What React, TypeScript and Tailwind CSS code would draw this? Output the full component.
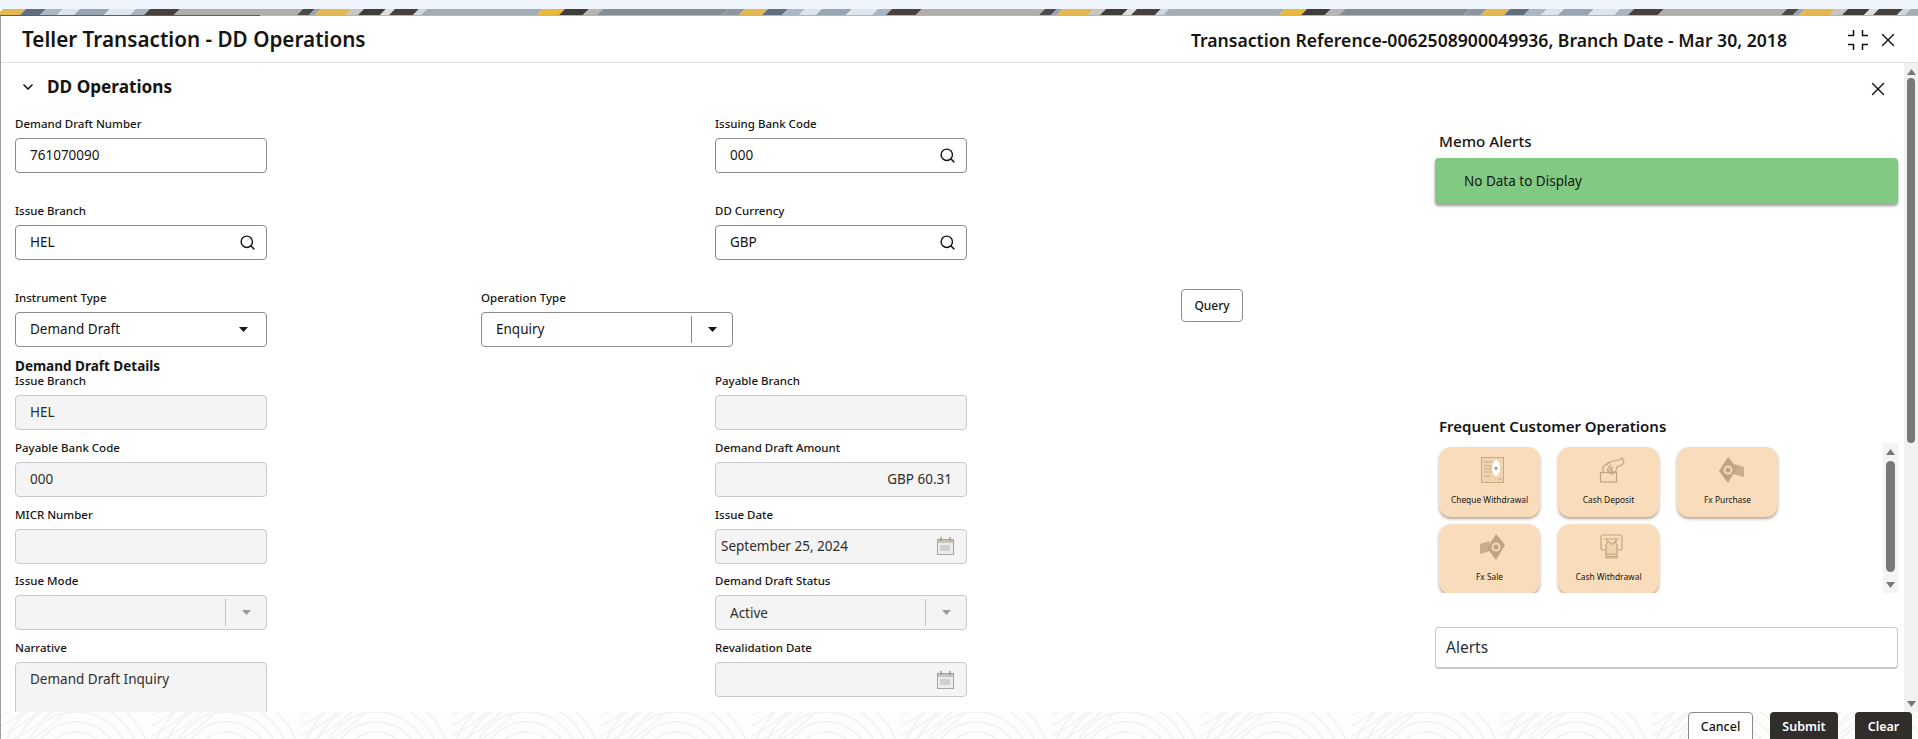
import { Search, X, ChevronDown } from "lucide-react";
import type { ReactNode } from "react";

// one repeat of the banner image, [end x, colour]; it tiles every 742px
const STRIP: [number, string][] = [
  [23, "#e3b84f"], [43, "#5f6f7d"], [60, "#a9b6c4"], [77, "#dbe3ec"], [107, "#98a5b2"], [133, "#dde5ee"], [147, "#a8b4c0"],
  [177, "#46413d"], [300, "#b0aeaa"], [312, "#4b4a48"], [318, "#9aa4ae"], [349, "#e3b84f"], [361, "#c5c5c2"], [383, "#3f3d3b"],
  [392, "#dddddb"], [416, "#45413e"], [424, "#cfd6dd"], [540, "#a3adb6"], [562, "#e8b93e"], [586, "#3f3d3b"], [600, "#b5b5b2"],
  [725, "#858e96"], [742, "#8e979f"],
];

function TopStrip() {
  return (
    <svg className="block h-[7px] w-full" viewBox="0 0 1918 7" preserveAspectRatio="none">
      {[0, 742, 1484].map((base) =>
        STRIP.map(([to, fill], i) => {
          const from = i === 0 ? 0 : STRIP[i - 1][0];
          return (
            <path
              key={`${base}-${to}`}
              d={`M${base + from - 3} 6H${base + to - 3}L${base + to + 3} 0H${base + from + 3}Z`}
              fill={fill}
            />
          );
        }),
      )}
      <rect x="0" y="6" width="260" height="1" fill="#5b5d72" />
      <rect x="260" y="6" width="1658" height="1" fill="#b4b6ba" />
    </svg>
  );
}

function FooterPattern() {
  return (
    <svg className="absolute inset-0 h-full w-full" aria-hidden="true">
      <defs>
        <pattern id="swirl" width="150" height="60" patternUnits="userSpaceOnUse" y="-6">
          {[14, 24, 34, 44, 54, 64, 74].map((r) => (
            <path key={r} d={`M${75 - r} 60A${r} ${r} 0 0 1 ${75 + r} 60`} fill="none" stroke="#f2f1f0" strokeWidth="1.5" />
          ))}
          {[10, 20, 30, 40, 50].map((r) => (
            <path key={r} d={`M0 ${r}Q${r} ${r / 2} ${r * 1.4} 0`} fill="none" stroke="#f3f2f1" strokeWidth="1.5" />
          ))}
        </pattern>
      </defs>
      <rect width="100%" height="100%" fill="#fdfdfc" />
      <rect width="100%" height="100%" fill="url(#swirl)" />
    </svg>
  );
}

function Caret({ muted }: { muted?: boolean }) {
  return (
    <svg width="9" height="5" viewBox="0 0 9 5" className={muted ? "text-[#9a9a9a]" : "text-[#161513]"}>
      <path d="M0 0h9L4.5 5z" fill="currentColor" />
    </svg>
  );
}

function CalendarIcon() {
  return (
    <svg width="17" height="18" viewBox="0 0 17 18" className="shrink-0">
      <rect x="0.5" y="2.5" width="16" height="15" fill="#e9edf2" stroke="#a8a39b" />
      <rect x="1" y="3" width="15" height="3" fill="#c9c4bb" />
      <path d="M4 0v4M13 0v4" stroke="#9b958c" strokeWidth="1.4" />
      <path d="M4 8v6M6 8v6M8 8v6M10 8v6M12 8v6" stroke="#b5b3af" />
    </svg>
  );
}

function Field({
  label,
  children,
  disabled,
  tall,
  className = "",
}: {
  label: string;
  children?: ReactNode;
  disabled?: boolean;
  tall?: boolean;
  className?: string;
}) {
  return (
    <div className={`w-[252px] ${className}`}>
      <div className="mb-[6px] h-4 text-[11.5px] leading-4 font-medium whitespace-nowrap text-[#161513]">{label}</div>
      <div
        className={`flex rounded-[4px] border text-[13.5px] ${tall ? "h-[70px] items-start pt-[6px]" : "h-[35px] items-center"} ${
          disabled ? "border-[#c9c9c9] bg-[#f4f4f4] text-[#2f2d2b]" : "border-[#8b8b8b] bg-white text-[#161513]"
        }`}
      >
        {children}
      </div>
    </div>
  );
}

function Value({ children }: { children?: ReactNode }) {
  return <span className="flex-1 pl-[14px]">{children}</span>;
}

function SearchBtn() {
  return <Search size={17} strokeWidth={2} className="mr-[10px] shrink-0 text-[#161513]" />;
}

function SelectEnd({ muted }: { muted?: boolean }) {
  return (
    <div className="flex h-full items-center">
      <div className={`h-[27px] w-px ${muted ? "bg-[#c4c4c4]" : "bg-[#8b8b8b]"}`} />
      <div className="flex w-[40px] justify-center">
        <Caret muted={muted} />
      </div>
    </div>
  );
}

function ChequeIcon() {
  return (
    <svg width="26" height="26" viewBox="0 0 26 26" fill="none" stroke="#c9a983" strokeWidth="1">
      <rect x="1.5" y="0.5" width="22" height="25" fill="#f0d3b0" />
      <path d="M4 5h11M4 9h8M4 12h8M4 15h8M4 19h6M18 22h4" />
      <ellipse cx="16" cy="11" rx="4" ry="8" fill="#fff" stroke="none" />
      <path d="M14 10h4l-2 4z" fill="#b39a7c" stroke="none" />
    </svg>
  );
}

function DepositIcon() {
  return (
    <svg width="26" height="26" viewBox="0 0 26 26" fill="none" stroke="#c4a37d" strokeWidth="1.2">
      <rect x="1.5" y="15.5" width="16" height="9.5" />
      <path d="M4 15v-5l5-4 5-2 6-1 3-2 2 4-2 3-5 2-1 4-5 4" />
      <path d="M7 8l4-3M9 11l3-3M11 13l3-3" />
      <path d="M8 12l3 5M11 11l3 5" strokeWidth="1.6" />
    </svg>
  );
}

function FxBuyIcon() {
  return (
    <svg width="26" height="26" viewBox="0 0 26 26">
      <path d="M17 7l9 3v10l-11-3z" fill="#c9ad8c" />
      <path d="M10 0l9 11-9 15L1 14z" fill="#bfa382" />
      <circle cx="10" cy="13" r="4.5" fill="#f0d8bb" />
      <circle cx="10" cy="13" r="2.5" fill="#bfa382" />
    </svg>
  );
}

function FxSellIcon() {
  return (
    <svg width="26" height="26" viewBox="0 0 26 26">
      <path d="M9 7L0 10v10l11-3z" fill="#c9ad8c" />
      <path d="M16 0l9 11-9 15-9-12z" fill="#bfa382" />
      <circle cx="16" cy="13" r="4.5" fill="#f0d8bb" />
      <circle cx="16" cy="13" r="2.5" fill="#bfa382" />
    </svg>
  );
}

function AtmIcon() {
  return (
    <svg width="26" height="26" viewBox="0 0 26 26" fill="none" stroke="#c4a37d" strokeWidth="1.2">
      <rect x="2" y="1" width="21" height="15" rx="2" />
      <path d="M5 5h15M8 5v7M17 5v7" />
      <path d="M9 7l3 3 2 0 3-3M7 10v14h11V10" fill="#f0d3b0" />
      <path d="M7 20h11M7 22.5h11" />
    </svg>
  );
}

const OPS: { label: string; icon: ReactNode }[] = [
  { label: "Cheque Withdrawal", icon: <ChequeIcon /> },
  { label: "Cash Deposit", icon: <DepositIcon /> },
  { label: "Fx Purchase", icon: <FxBuyIcon /> },
  { label: "Fx Sale", icon: <FxSellIcon /> },
  { label: "Cash Withdrawal", icon: <AtmIcon /> },
];

function Arrow({ up }: { up?: boolean }) {
  return (
    <svg width="9" height="6" viewBox="0 0 9 6" className="shrink-0 text-[#787878]">
      <path d={up ? "M4.5 0L9 6H0z" : "M0 0h9L4.5 6z"} fill="currentColor" />
    </svg>
  );
}

function DetailRow({ left, right }: { left: ReactNode; right: ReactNode }) {
  return (
    <div className="mb-[9.75px] grid grid-cols-[700px_252px]">
      {left}
      {right}
    </div>
  );
}

function CollapseIcon() {
  return (
    <svg width="20" height="20" viewBox="0 0 20 20" fill="none" stroke="#161513" strokeWidth="1.5">
      <path d="M0 5.5h5.5V0M20 5.5h-5.5V0M0 14.5h5.5V20M20 14.5h-5.5V20" />
    </svg>
  );
}

export default function App() {
  return (
    <div className="flex h-[739px] w-[1918px] flex-col overflow-hidden bg-white font-['Noto_Sans',sans-serif] text-[#161513]">
      <div className="h-[9px] shrink-0 bg-[#f0f4fd]" />
      <TopStrip />
      <div className="flex min-h-0 flex-1 flex-col border-l border-[#9d9d9d]">
        <header className="flex h-[47px] shrink-0 items-center border-b border-[#e2e2e2] pt-[2px] pr-[19px] pl-[21px]">
          <h1 className="text-[20.7px] font-semibold">Teller Transaction - DD Operations</h1>
          <div className="ml-auto text-[17.6px] font-semibold">
            Transaction Reference-0062508900049936, Branch Date - Mar 30, 2018
          </div>
          <div className="ml-[61px] flex items-center gap-[9px]">
            <CollapseIcon />
            <X size={22} strokeWidth={1.5} />
          </div>
        </header>

        <div className="flex min-h-0 flex-1 overflow-hidden">
          <main className="min-w-0 flex-1 pl-[14px]">
            <div className="flex h-[44px] items-center pt-[4px] pl-[5px]">
              <ChevronDown size={16} strokeWidth={2.4} />
              <h2 className="ml-[11px] text-[17.2px] font-bold">DD Operations</h2>
            </div>
            <div className="mt-[9px] grid grid-cols-[700px_252px] gap-y-[30px]">
              <Field label="Demand Draft Number">
                <Value>761070090</Value>
              </Field>
              <Field label="Issuing Bank Code">
                <Value>000</Value>
                <SearchBtn />
              </Field>
              <Field label="Issue Branch">
                <Value>HEL</Value>
                <SearchBtn />
              </Field>
              <Field label="DD Currency">
                <Value>GBP</Value>
                <SearchBtn />
              </Field>
            </div>
            <div className="mt-[30px] grid grid-cols-[466px_700px_auto]">
              <Field label="Instrument Type">
                <Value>Demand Draft</Value>
                <div className="flex w-[46px] justify-center">
                  <Caret />
                </div>
              </Field>
              <Field label="Operation Type">
                <Value>Enquiry</Value>
                <SelectEnd />
              </Field>
              <button className="-mt-px h-[33px] w-[62px] self-start rounded-[4px] border border-[#8b8b8b] bg-white text-[12px] font-medium">
                Query
              </button>
            </div>
            <h3 className="mt-[12px] text-[13.5px] leading-[14px] font-bold">Demand Draft Details</h3>
            <div>
              <DetailRow
                left={
                  <Field label="Issue Branch" disabled>
                    <Value>HEL</Value>
                  </Field>
                }
                right={<Field label="Payable Branch" disabled />}
              />
              <DetailRow
                left={
                  <Field label="Payable Bank Code" disabled>
                    <Value>000</Value>
                  </Field>
                }
                right={
                  <Field label="Demand Draft Amount" disabled>
                    <span className="flex-1 pr-[14px] text-right">GBP 60.31</span>
                  </Field>
                }
              />
              <DetailRow
                left={<Field label="MICR Number" disabled />}
                right={
                  <Field label="Issue Date" disabled>
                    <span className="flex-1 pl-[5px]">September 25, 2024</span>
                    <span className="mr-[12px]">
                      <CalendarIcon />
                    </span>
                  </Field>
                }
              />
              <DetailRow
                left={
                  <Field label="Issue Mode" disabled>
                    <Value />
                    <SelectEnd muted />
                  </Field>
                }
                right={
                  <Field label="Demand Draft Status" disabled>
                    <Value>Active</Value>
                    <SelectEnd muted />
                  </Field>
                }
              />
              <DetailRow
                left={
                  <Field label="Narrative" disabled tall>
                    <Value>Demand Draft Inquiry</Value>
                  </Field>
                }
                right={
                  <Field label="Revalidation Date" disabled>
                    <Value />
                    <span className="mr-[12px]">
                      <CalendarIcon />
                    </span>
                  </Field>
                }
              />
            </div>
          </main>

          <aside className="w-[463px] shrink-0">
            <div className="mt-[15px] flex justify-end pr-[9px]">
              <X size={22} strokeWidth={1.5} />
            </div>
            <h4 className="mt-[31px] h-5 pl-[4px] text-[15.2px] leading-5 font-medium">Memo Alerts</h4>
            <div className="mt-[7px] flex h-[46px] items-center rounded-[4px] bg-[#82c983] pt-[1px] pl-[29px] text-[13.5px] shadow-[0_2px_3px_rgba(0,0,0,0.4)]">
              No Data to Display
            </div>
            <h4 className="mt-[212px] h-5 pl-[4px] text-[15px] leading-5 font-semibold">Frequent Customer Operations</h4>
            <div className="mt-[7px] flex h-[150px] overflow-hidden">
              <div className="grid flex-1 grid-cols-[101px_101px_101px] content-start gap-x-[18px] gap-y-[7px] pt-[4px] pl-[4px]">
                {OPS.map((op) => (
                  <div
                    key={op.label}
                    className="flex h-[70px] flex-col items-center rounded-[12px] bg-[#f9dcbb] pt-[10px] shadow-[0_2px_3px_rgba(90,60,20,0.45)]"
                  >
                    <div className="ml-[6px] h-[26px]">{op.icon}</div>
                    <div className="mt-[10px] text-[8.4px] leading-[14px] whitespace-nowrap">{op.label}</div>
                  </div>
                ))}
              </div>
              <div className="flex w-[15px] shrink-0 flex-col items-center bg-[#f4f4f4] pt-[6px] pb-[5px]">
                <Arrow up />
                <div className="mt-[6px] mb-[10px] w-[9px] flex-1 rounded-full bg-[#787878]" />
                <Arrow />
              </div>
            </div>
            <div className="mt-[34px] flex h-[42px] items-center rounded-[4px] border border-b-2 border-[#c9c9c9] pt-[1px] pl-[10px] text-[15.5px] text-[#2a2f3a]">
              Alerts
            </div>
          </aside>

          <div className="ml-[6px] flex w-[14px] shrink-0 flex-col items-center bg-[#f1f1f1] pt-[6px] pb-[5px]">
            <Arrow up />
            <div className="mt-[3px] h-[365px] w-[8px] rounded-full bg-[#787878]" />
            <div className="flex-1" />
            <Arrow />
          </div>
        </div>

        <footer className="relative flex h-[27px] shrink-0 justify-end gap-[17px] pr-[6px]">
          <FooterPattern />
          <button className="relative h-[36px] w-[65px] rounded-[4px] border border-[#8b8b8b] bg-white pb-[5px] text-[12.5px] font-medium">
            Cancel
          </button>
          <button className="relative h-[36px] w-[68px] rounded-[4px] bg-[#312d2a] pb-[5px] text-[12.5px] font-semibold text-white">
            Submit
          </button>
          <button className="relative h-[36px] w-[57px] rounded-[4px] bg-[#312d2a] pb-[5px] text-[12.5px] font-semibold text-white">
            Clear
          </button>
        </footer>
      </div>
    </div>
  );
}
